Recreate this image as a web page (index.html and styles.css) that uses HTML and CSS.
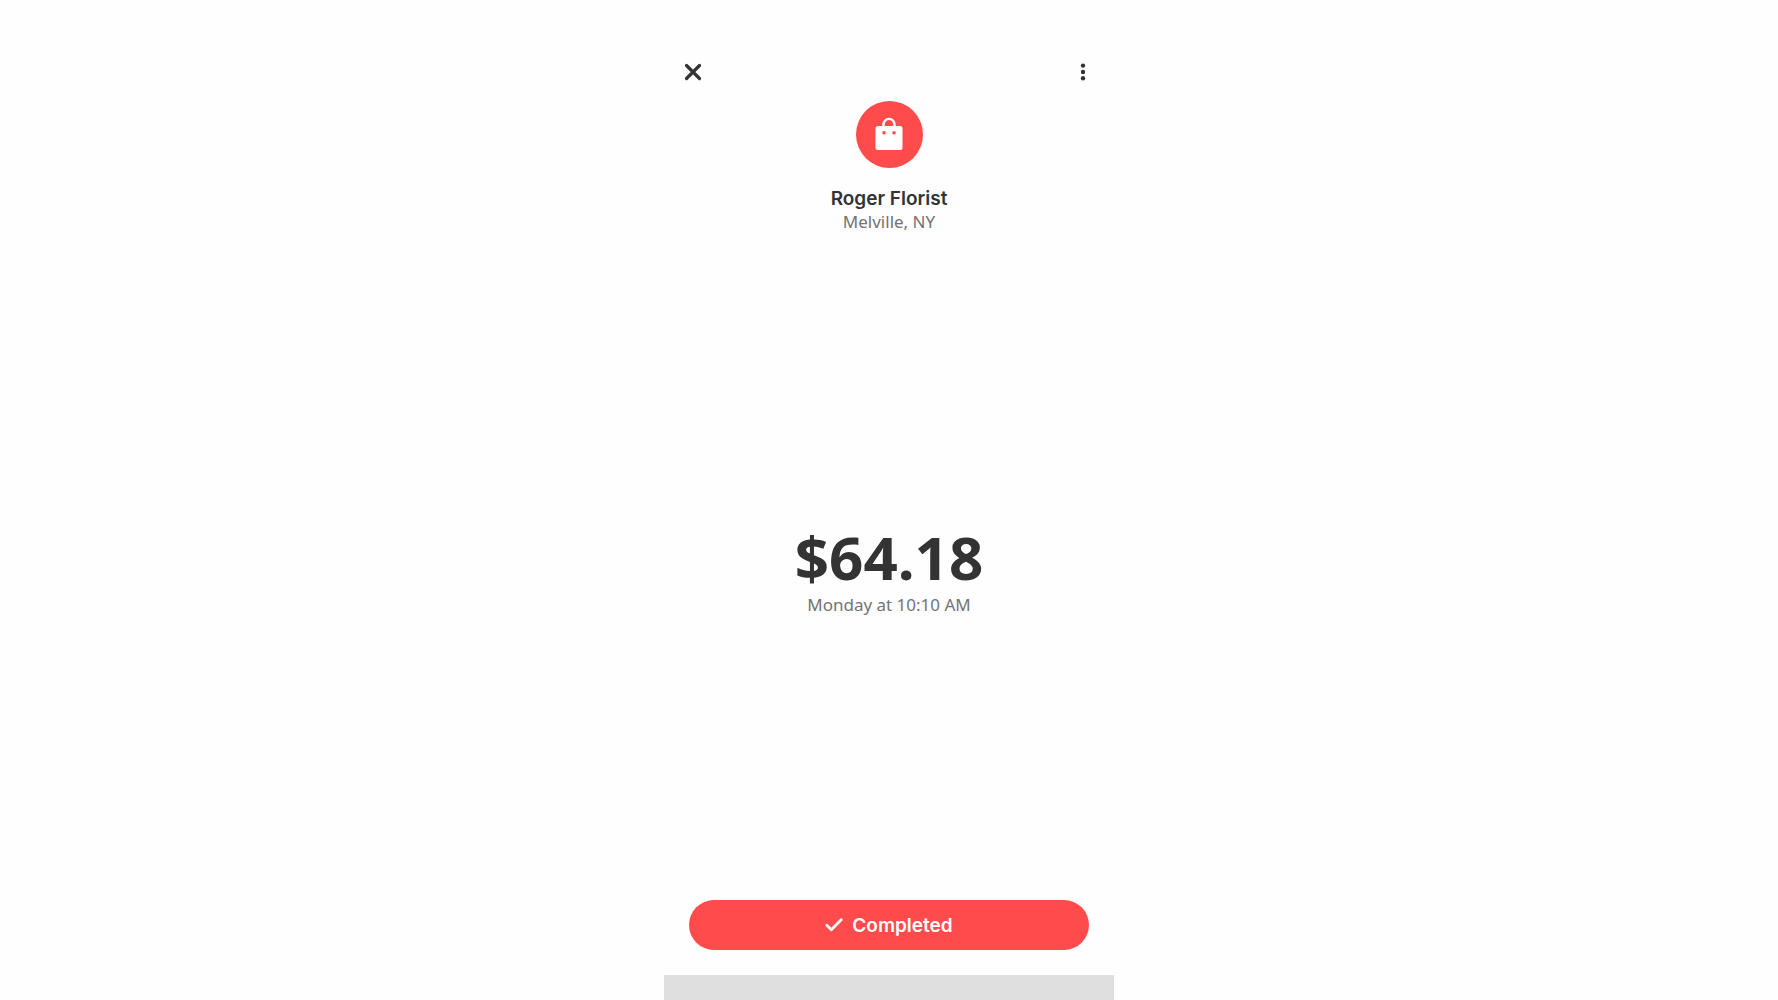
FILE: index.html
```html
<!DOCTYPE html>
<html lang="en">
  <head>
    <meta charset="UTF-8" />
    <meta name="viewport" content="width=device-width, initial-scale=1.0" />
    <link rel="stylesheet" href="styles.css">
    <title>Roger Florist</title>
  </head>
  <body>
    <div class="screen">
      <header class="top-bar">
        <button class="icon-button" aria-label="Close">
          <svg width="18" height="18" viewBox="0 0 18 18">
            <path d="M2.5 2.5l13 13M15.5 2.5l-13 13" fill="none" stroke="#333" stroke-width="3.2" stroke-linecap="round" />
          </svg>
        </button>
        <button class="icon-button" aria-label="More options">
          <svg width="18" height="18" viewBox="0 0 18 18">
            <g fill="#333">
              <circle cx="9" cy="2.6" r="2.2" />
              <circle cx="9" cy="9" r="2.2" />
              <circle cx="9" cy="15.3" r="2.2" />
            </g>
          </svg>
        </button>
      </header>

      <section class="merchant">
        <div class="avatar">
          <svg width="28" height="34" viewBox="0 0 28 34">
            <path d="M8.5 10V7.4a5.5 5.5 0 0 1 11 0V10" fill="none" stroke="#fff" stroke-width="2.4" />
            <rect x="0.5" y="9" width="27" height="24" rx="2.5" fill="#fff" />
            <circle cx="9" cy="15.7" r="1.8" fill="#ff4b4b" />
            <circle cx="19" cy="15.7" r="1.8" fill="#ff4b4b" />
          </svg>
        </div>
        <h1 class="name">Roger Florist</h1>
        <p class="detail">Melville, NY</p>
      </section>

      <main class="payment">
        <p class="amount">$64.18</p>
        <p class="detail">Monday at 10:10 AM</p>
      </main>

      <div class="actions">
        <button class="status">
          <svg width="18" height="14" viewBox="0 0 18 14">
            <path d="M1.8 7.2l4.5 4.6L16.2 1.8" fill="none" stroke="#fff" stroke-width="2.8" stroke-linecap="round" stroke-linejoin="round" />
          </svg>
          Completed
        </button>
      </div>
      <footer class="bottom-bar"></footer>
    </div>
  </body>
</html>
```
FILE: styles.css
```css
* {
  box-sizing: border-box;
}

body {
  margin: 0;
  background-color: #fefefe;
  color: #333;
  font-family: "Noto Sans", "Open Sans", sans-serif;
}

h1,
p {
  margin: 0;
}

button {
  border: none;
  font-family: inherit;
  cursor: pointer;
}

.screen {
  display: flex;
  flex-direction: column;
  max-width: 450px;
  min-height: 100vh;
  margin: 0 auto;
}

/* close and menu */
.top-bar {
  display: flex;
  justify-content: space-between;
  padding: 56px 15px 0 13px;
}

.icon-button {
  display: flex;
  padding: 7px;
  background: none;
}

/* merchant */
.merchant {
  display: flex;
  flex-direction: column;
  align-items: center;
  padding-top: 13px;
}

.avatar {
  display: flex;
  align-items: center;
  justify-content: center;
  width: 67px;
  height: 67px;
  margin-bottom: 20px;
  padding-bottom: 2px;
  border-radius: 50%;
  background-color: #ff4b4b;
}

.name {
  font-family: Inter, sans-serif;
  font-size: 19px;
  font-weight: 600;
  line-height: 22px;
}

.detail {
  color: #737373;
  font-size: 17px;
  line-height: 24px;
}

/* payment */
.payment {
  flex: 1;
  display: flex;
  flex-direction: column;
  align-items: center;
  justify-content: center;
  padding-top: 4px;
}

.amount {
  font-size: 60px;
  font-weight: 700;
  line-height: 72px;
}

/* status button */
.actions {
  padding: 0 25px 25px;
}

.status {
  display: flex;
  align-items: center;
  justify-content: center;
  gap: 9px;
  width: 100%;
  height: 50px;
  border-radius: 25px;
  background-color: #ff4b4b;
  color: #fff;
  font-family: Inter, sans-serif;
  font-size: 19px;
  font-weight: 600;
}

.bottom-bar {
  height: 25px;
  background-color: #dfdfdf;
}
```
